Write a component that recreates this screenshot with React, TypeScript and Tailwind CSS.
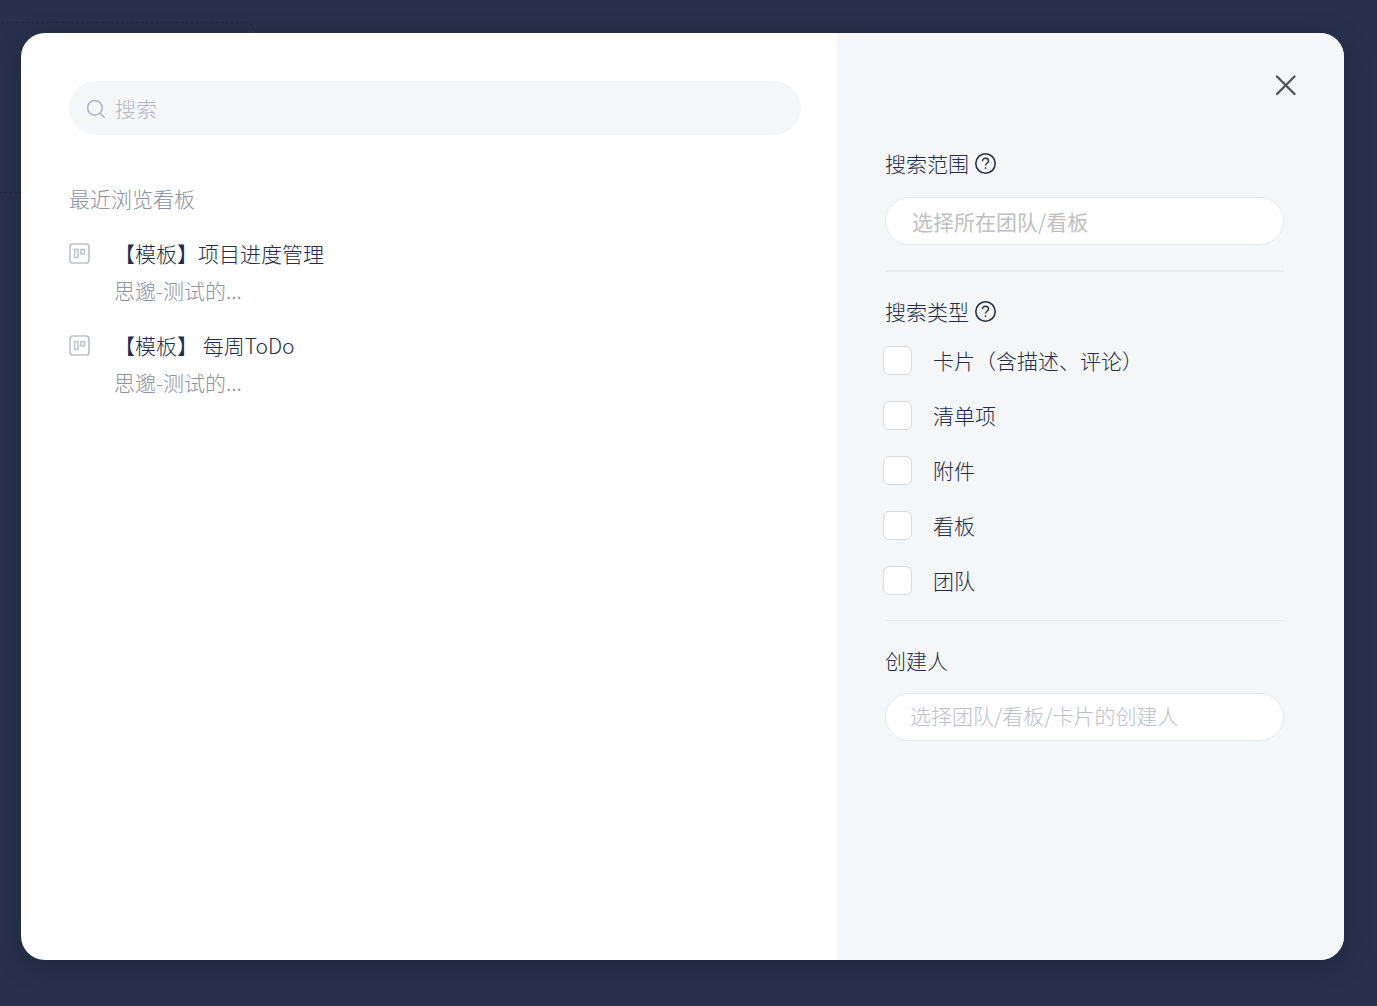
import { useState } from "react";

interface Board {
  id: string;
  name: string;
  team: string;
}

const RECENT_BOARDS: Board[] = [
  { id: "project", name: "【模板】项目进度管理", team: "思邈-测试的..." },
  { id: "weekly", name: "【模板】 每周ToDo", team: "思邈-测试的..." },
];

const SEARCH_TYPES = [
  { id: "card", label: "卡片（含描述、评论）" },
  { id: "checklist", label: "清单项" },
  { id: "attachment", label: "附件" },
  { id: "board", label: "看板" },
  { id: "team", label: "团队" },
];

function SearchIcon() {
  return (
    <svg width="20" height="20" viewBox="0 0 20 20" fill="none" stroke="#b2b5c1" strokeWidth="1.6" strokeLinecap="round">
      <circle cx="7.9" cy="9.8" r="7.3" />
      <path d="M13.2 15.2l4 4" />
    </svg>
  );
}

function BoardIcon() {
  return (
    <svg width="21" height="21" viewBox="0 0 21 21" fill="none" stroke="#bfc1cb" strokeWidth="1.7">
      <rect x="1" y="1" width="19" height="19" rx="2.8" />
      <rect x="5.6" y="6.6" width="3.4" height="7.8" rx="0.5" strokeWidth="1.5" />
      <rect x="11.9" y="6.6" width="3.6" height="4.4" rx="0.5" strokeWidth="1.5" />
    </svg>
  );
}

function HelpIcon() {
  return (
    <svg width="21" height="21" viewBox="0 0 21 21" fill="none" stroke="#28304b" strokeWidth="1.6">
      <circle cx="10.5" cy="10.5" r="9.7" />
      <path d="M7.5 8.2c0-1.8 1.2-2.9 3-2.9s3 1.1 3 2.7c0 2.2-3 2.3-3 4.6" strokeWidth="1.4" />
      <circle cx="10.5" cy="15.1" r="0.9" fill="#28304b" stroke="none" />
    </svg>
  );
}

function CloseIcon() {
  return (
    <svg width="21" height="21" viewBox="0 0 21 21" fill="none" stroke="#505050" strokeWidth="2.3" strokeLinecap="round">
      <path d="M2 1.5l17.5 17.5M19.5 1.5L2 19" />
    </svg>
  );
}

export default function App() {
  const [query, setQuery] = useState("");
  const [types, setTypes] = useState<string[]>([]);

  const toggleType = (id: string) => {
    setTypes((prev) => (prev.includes(id) ? prev.filter((t) => t !== id) : [...prev, id]));
  };

  return (
    <div className="relative flex min-h-screen overflow-hidden bg-[#28314b] pt-[33px] pr-[33px] pb-[46px] pl-[21px] font-['Noto_Sans_CJK_SC',sans-serif] text-[21px] leading-[37px] font-light text-[#232c4a] antialiased">
      {/* dimmed board card behind the dialog */}
      <div className="absolute top-[22px] -left-4 h-[171px] w-[272px] rounded-xl border border-dashed border-[#1f2744]" />

      <div
        role="dialog"
        aria-label="搜索"
        className="relative flex flex-1 overflow-hidden rounded-3xl bg-white shadow-[0_6px_24px_rgba(20,28,56,0.45)]"
      >
        <main className="flex-1 pt-12 pr-9 pl-12">
          <label className="flex h-[54px] items-center gap-2 rounded-full bg-[#f4f6f8] pr-6 pl-[18px]">
            <SearchIcon />
            <input
              type="text"
              aria-label="搜索"
              value={query}
              onChange={(e) => setQuery(e.target.value)}
              placeholder="搜索"
              className="min-w-0 flex-1 bg-transparent outline-none placeholder:text-[#b4b7c3]"
            />
          </label>

          <h2 className="mt-[45px] text-[#8c91a3]">最近浏览看板</h2>
          <ul className="mt-[18px] flex flex-col gap-[18px]">
            {RECENT_BOARDS.map((board) => (
              <li key={board.id}>
                <a href="#" className="flex gap-6">
                  <span className="flex h-[37px] items-center">
                    <BoardIcon />
                  </span>
                  <span className="flex flex-col">
                    <span className="whitespace-pre">{board.name}</span>
                    <span className="text-[#8c91a3]">{board.team}</span>
                  </span>
                </a>
              </li>
            ))}
          </ul>
        </main>

        <aside className="relative w-[507px] shrink-0 bg-[#f4f6f8] pt-[112px] pr-[60px] pl-12">
          <button type="button" aria-label="关闭" className="absolute top-[42px] right-12">
            <CloseIcon />
          </button>

          <section className="border-b-2 border-[#ebecee] pb-[25px]">
            <div className="flex items-center gap-1.5">
              <label htmlFor="scope">搜索范围</label>
              <button type="button" aria-label="搜索范围说明">
                <HelpIcon />
              </button>
            </div>
            <input
              id="scope"
              type="text"
              placeholder="选择所在团队/看板"
              className="mt-[15px] h-12 w-full rounded-full border border-[#e6e7eb] bg-white px-[26px] font-normal outline-none placeholder:text-[#bfbfbf]"
            />
          </section>

          <section className="border-b border-[#e9eaed] pt-[21px] pb-3">
            <div className="flex items-center gap-1.5">
              <h3>搜索类型</h3>
              <button type="button" aria-label="搜索类型说明">
                <HelpIcon />
              </button>
            </div>
            <ul className="mt-[3px] -ml-0.5">
              {SEARCH_TYPES.map((type) => (
                <li key={type.id}>
                  <label className="flex h-[55px] items-center gap-[21px]">
                    <input
                      type="checkbox"
                      checked={types.includes(type.id)}
                      onChange={() => toggleType(type.id)}
                      className="size-[29px] shrink-0 appearance-none rounded-md border border-[#d9d9d9] bg-white checked:border-[#28304b] checked:bg-[#28304b]"
                    />
                    {type.label}
                  </label>
                </li>
              ))}
            </ul>
          </section>

          <section className="pt-[21px]">
            <label htmlFor="creator" className="block">
              创建人
            </label>
            <input
              id="creator"
              type="text"
              placeholder="选择团队/看板/卡片的创建人"
              className="mt-3.5 h-12 w-full rounded-full border border-[#e6e7eb] bg-white px-6 pb-1 outline-none placeholder:text-[#bdc0cb]"
            />
          </section>
        </aside>
      </div>
    </div>
  );
}
